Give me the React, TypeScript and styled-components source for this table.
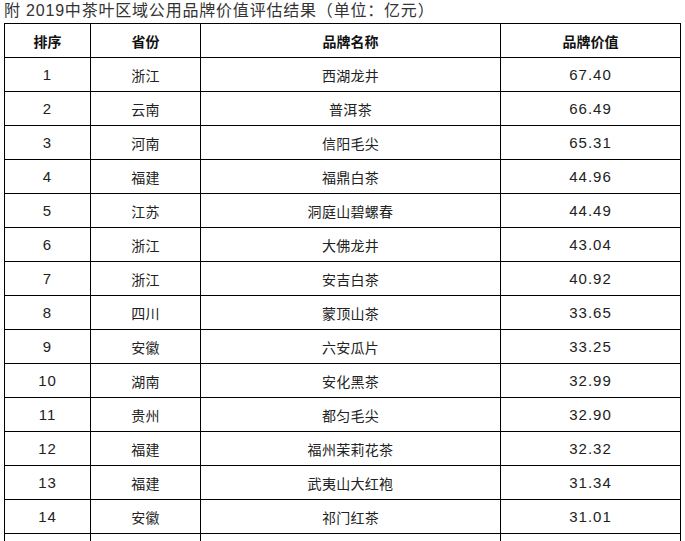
import { FC } from 'react'
import styled, { createGlobalStyle } from 'styled-components'

const GlobalStyle = createGlobalStyle`
    body {
        margin: 0;
        background: #ffffff;
        font-family: 'Liberation Sans', 'Noto Sans CJK SC', sans-serif;
    }
`

const Page = styled.div`
    width: 685px;
`
const Title = styled.h1`
    margin: 0;
    height: 23px;
    padding-left: 4px;
    font-family: 'Liberation Sans', 'Noto Sans CJK SC', sans-serif;
    font-weight: 400;
    font-size: 16px;
    line-height: 21px;
    color: #333333;
    letter-spacing: 0.8px;
    white-space: nowrap;
`
const Table = styled.table`
    margin-left: 4px;
    width: 677px;
    border-collapse: collapse;
    table-layout: fixed;
`
const HeadCell = styled.th`
    height: 33px;
    padding: 0;
    border: 1px solid #000000;
    font-family: 'Noto Sans CJK SC', sans-serif;
    font-weight: 700;
    font-size: 14px;
    color: #111111;
    text-align: center;
    vertical-align: middle;
`
const Cell = styled.td<{ $numeric?: boolean }>`
    height: 33px;
    padding: 0;
    border: 1px solid #000000;
    font-family: ${p => p.$numeric ? "'Liberation Sans', sans-serif" : "'Noto Sans CJK SC', sans-serif"};
    font-size: ${p => p.$numeric ? '15px' : '14px'};
    letter-spacing: ${p => p.$numeric ? '1px' : '0.3px'};
    color: #222222;
    text-align: center;
    vertical-align: middle;
`

type Brand = {
    rank: number,
    province: string,
    name: string,
    value: string
}

const brands: Brand[] = [
    { rank: 1, province: '浙江', name: '西湖龙井', value: '67.40' },
    { rank: 2, province: '云南', name: '普洱茶', value: '66.49' },
    { rank: 3, province: '河南', name: '信阳毛尖', value: '65.31' },
    { rank: 4, province: '福建', name: '福鼎白茶', value: '44.96' },
    { rank: 5, province: '江苏', name: '洞庭山碧螺春', value: '44.49' },
    { rank: 6, province: '浙江', name: '大佛龙井', value: '43.04' },
    { rank: 7, province: '浙江', name: '安吉白茶', value: '40.92' },
    { rank: 8, province: '四川', name: '蒙顶山茶', value: '33.65' },
    { rank: 9, province: '安徽', name: '六安瓜片', value: '33.25' },
    { rank: 10, province: '湖南', name: '安化黑茶', value: '32.99' },
    { rank: 11, province: '贵州', name: '都匀毛尖', value: '32.90' },
    { rank: 12, province: '福建', name: '福州茉莉花茶', value: '32.32' },
    { rank: 13, province: '福建', name: '武夷山大红袍', value: '31.34' },
    { rank: 14, province: '安徽', name: '祁门红茶', value: '31.01' },
]

const App: FC = () => {
    return (
        <Page>
            <GlobalStyle />
            <Title>附 2019中茶叶区域公用品牌价值评估结果（单位：亿元）</Title>
            <Table>
                <colgroup>
                    <col style={{ width: 86 }} />
                    <col style={{ width: 110 }} />
                    <col style={{ width: 300 }} />
                    <col style={{ width: 180 }} />
                </colgroup>
                <thead>
                    <tr>
                        <HeadCell>排序</HeadCell>
                        <HeadCell>省份</HeadCell>
                        <HeadCell>品牌名称</HeadCell>
                        <HeadCell>品牌价值</HeadCell>
                    </tr>
                </thead>
                <tbody>
                    {brands.map(b => (
                        <tr key={b.rank}>
                            <Cell $numeric>{b.rank}</Cell>
                            <Cell>{b.province}</Cell>
                            <Cell>{b.name}</Cell>
                            <Cell $numeric>{b.value}</Cell>
                        </tr>
                    ))}
                    {/* next row continues below the fold */}
                    <tr>
                        <Cell />
                        <Cell />
                        <Cell />
                        <Cell />
                    </tr>
                </tbody>
            </Table>
        </Page>
    )
}

export default App
